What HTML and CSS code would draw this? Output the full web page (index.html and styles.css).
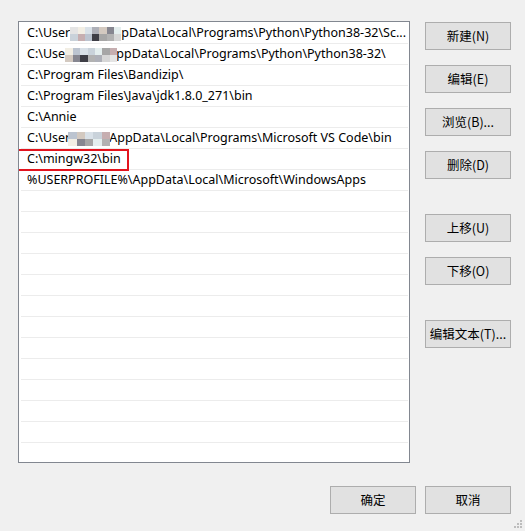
FILE: index.html
```html
<!DOCTYPE html>
<html lang="zh-CN">
<head>
<meta charset="utf-8">
<title>编辑环境变量</title>
<link rel="stylesheet" href="styles.css">
</head>
<body>
<div class="window">
  <div class="main">
    <div class="list">
      <div class="row"><span>C:\User</span><span class="mosaic m1"><i class="c1"></i><i class="c2"></i><i class="c3"></i><i class="c4"></i><i class="c5"></i><i class="c6"></i><i class="c7"></i><i class="c8"></i><i class="c9"></i><i class="c10"></i><i class="c11"></i><i class="c12"></i><i class="c13"></i><i class="c14"></i></span><span>pData\Local\Programs\Python\Python38-32\Sc...</span></div>
      <div class="row"><span>C:\User</span><span class="mosaic m2"><i class="c3"></i><i class="c9"></i><i class="c6"></i><i class="c11"></i><i class="c5"></i><i class="c8"></i><i class="c2"></i><i class="c12"></i><i class="c13"></i><i class="c7"></i><i class="c10"></i><i class="c14"></i><i class="c4"></i><i class="c1"></i></span><span>ppData\Local\Programs\Python\Python38-32\</span></div>
      <div class="row">C:\Program Files\Bandizip\</div>
      <div class="row">C:\Program Files\Java\jdk1.8.0_271\bin</div>
      <div class="row">C:\Annie</div>
      <div class="row"><span>C:\User</span><span class="mosaic m3"><i class="c6"></i><i class="c3"></i><i class="c9"></i><i class="c11"></i><i class="c5"></i><i class="c10"></i><i class="c2"></i><i class="c13"></i><i class="c4"></i><i class="c12"></i></span><span>AppData\Local\Programs\Microsoft VS Code\bin</span></div>
      <div class="row marked">C:\mingw32\bin</div>
      <div class="row">%USERPROFILE%\AppData\Local\Microsoft\WindowsApps</div>
      <div class="row"></div>
      <div class="row"></div>
      <div class="row"></div>
      <div class="row"></div>
      <div class="row"></div>
      <div class="row"></div>
      <div class="row"></div>
      <div class="row"></div>
      <div class="row"></div>
      <div class="row"></div>
      <div class="row"></div>
      <div class="row"></div>
      <div class="row"></div>
      <div class="row"></div>
    </div>
    <div class="side">
      <button class="btn">新建(N)</button>
      <button class="btn">编辑(E)</button>
      <button class="btn">浏览(B)...</button>
      <button class="btn">删除(D)</button>
      <button class="btn far">上移(U)</button>
      <button class="btn">下移(O)</button>
      <button class="btn far">编辑文本(T)...</button>
    </div>
  </div>
  <div class="footer">
    <button class="btn">确定</button>
    <button class="btn">取消</button>
  </div>
  <svg class="grip" width="10" height="9" viewBox="0 0 10 9">
    <rect x="6" y="0" width="2" height="2" fill="#bdbdbd"/>
    <rect x="3" y="3" width="2" height="2" fill="#bdbdbd"/>
    <rect x="6" y="3" width="2" height="2" fill="#bdbdbd"/>
    <rect x="0" y="6" width="2" height="2" fill="#bdbdbd"/>
    <rect x="3" y="6" width="2" height="2" fill="#bdbdbd"/>
    <rect x="6" y="6" width="2" height="2" fill="#bdbdbd"/>
  </svg>
</div>
</body>
</html>
```
FILE: styles.css
```css
html, body {
  margin: 0;
  padding: 0;
  background: #f0f0f0;
}

.window {
  position: relative;
  width: 525px;
  height: 531px;
  box-sizing: border-box;
  padding: 21px 14px 0 18px;
  font-family: "Noto Sans", "Noto Sans CJK SC", sans-serif;
  font-size: 12px;
  color: #000;
  overflow: hidden;
}

.main {
  display: flex;
  align-items: flex-start;
  gap: 15px;
}

.list {
  width: 392px;
  height: 442px;
  box-sizing: border-box;
  border: 1px solid #828790;
  background: #fff;
  padding: 1px 1px 0 1px;
  overflow: hidden;
  font-size: 12.5px;
}

.row {
  position: relative;
  height: 20px;
  line-height: 20px;
  border-bottom: 1px solid #ececec;
  margin: 0 0 0 1px;
  padding-left: 6px;
  white-space: nowrap;
  overflow: visible;
  display: flex;
  align-items: center;
}

.row.marked::after {
  content: "";
  position: absolute;
  left: -4px;
  top: 0;
  width: 108px;
  height: 18px;
  border: 2px solid #e3141e;
}

.mosaic {
  display: inline-grid;
  grid-template-rows: 7px 7px;
  grid-auto-flow: column;
  height: 14px;
  margin-top: 1px;
  filter: blur(0.6px);
}
.m1 { width: 51px; grid-template-columns: repeat(7, 1fr); }
.m2 { width: 52px; margin-left: -5px; margin-right: -1px; grid-template-columns: repeat(7, 1fr); }
.m3 { width: 42px; margin-left: -2px; margin-right: -1px; grid-template-columns: repeat(5, 1fr); }

.mosaic i { display: block; }
.c1 { background: #e4e4e4; }
.c2 { background: #c9d2da; }
.c3 { background: #f2eee4; }
.c4 { background: #c6aeb0; }
.c5 { background: #d9e1e8; }
.c6 { background: #bcc4d0; }
.c7 { background: #aeb0b8; }
.c8 { background: #3e3e46; }
.c9 { background: #d3c9c0; }
.c10 { background: #a6a6a6; }
.c11 { background: #868690; }
.c12 { background: #b2b2b2; }
.c13 { background: #e4eeee; }
.c14 { background: #d6d6d6; }

.side {
  display: flex;
  flex-direction: column;
  gap: 15px;
  margin-top: 1px;
}

.btn {
  width: 86px;
  height: 28px;
  box-sizing: border-box;
  border: 1px solid #adadad;
  background: #e1e1e1;
  font-family: "Noto Sans CJK SC", "Noto Sans", sans-serif;
  font-size: 12.5px;
  color: #000;
  padding: 0;
  line-height: 26px;
  text-align: center;
}

.btn.far {
  margin-top: 20px;
}

.footer {
  display: flex;
  justify-content: flex-end;
  gap: 9px;
  margin-top: 23px;
}

.grip {
  position: absolute;
  right: 1px;
  bottom: 2px;
}
```
